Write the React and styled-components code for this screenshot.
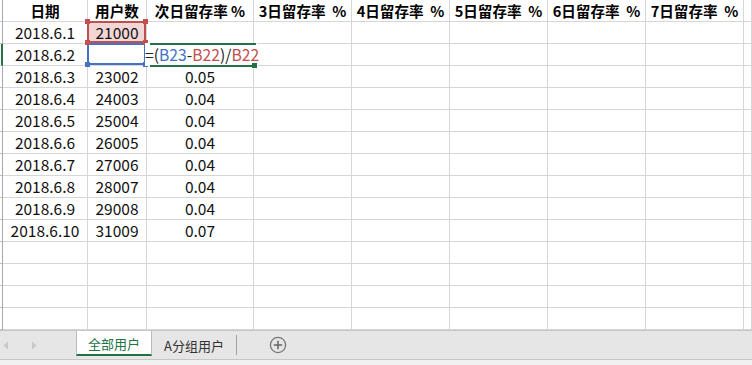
import React from 'react';
import styled, { createGlobalStyle, css } from 'styled-components';

const GlobalStyle = createGlobalStyle`
    html, body {
        margin: 0;
        padding: 0;
        background: #fff;
    }
    body {
        font-family: "Noto Sans CJK SC", "Noto Sans", sans-serif;
        color: #111;
    }
`;

const GRID_LINE = '#d6d6d6';
const GREEN = '#217346';
const RED = '#c0504d';
const BLUE = '#4472c4';

const Sheet = styled.div`
    width: 752px;
    height: 365px;
    overflow: hidden;
    display: flex;
    flex-direction: column;
`;

const Grid = styled.div`
    display: grid;
    grid-template-columns: 3px 85px 59px 107px repeat(5, 98px) 1fr;
    grid-auto-rows: 22px;
    height: 330px;
`;

const RowStub = styled.div`
    box-sizing: border-box;
    border-right: ${ ({ active }) => active ? `2px solid ${ GREEN }` : '1px solid #a8a8a8' };
    border-bottom: 1px solid #bdbdbd;
`;

const Cell = styled.div`
    position: relative;
    box-sizing: border-box;
    border-right: 1px solid ${ GRID_LINE };
    border-bottom: 1px solid ${ GRID_LINE };
    display: flex;
    align-items: center;
    justify-content: center;
    padding-top: 1px;
    font-size: 15.5px;
    line-height: 1;
    white-space: pre;
    background: ${ ({ fill }) => fill || 'transparent' };
`;

const HeaderCell = styled(Cell)`
    font-size: 14.6px;
    font-weight: 700;
    color: #000;
`;

const SelectBox = styled.div`
    position: absolute;
    top: -1px;
    left: -1px;
    right: 0;
    bottom: 0;
    border: 2px solid ${ ({ color }) => color };
    z-index: ${ ({ layer }) => layer };
    pointer-events: none;
`;

const Handle = styled.span`
    position: absolute;
    width: 5px;
    height: 5px;
    background: ${ ({ color }) => color };
    ${ ({ corner }) => corner.includes('t') ? css`top: -4px;` : css`bottom: -4px;` }
    ${ ({ corner }) => corner.includes('l') ? css`left: -4px;` : css`right: -4px;` }
`;

const Editor = styled.div`
    position: absolute;
    top: -1px;
    left: -2px;
    width: 112px;
    height: 23px;
    background: #fff;
    z-index: 3;
    display: flex;
    align-items: center;
    justify-content: flex-start;
    padding-top: 1px;
    box-sizing: border-box;
    font-size: 15.7px;
    &::before, &::after {
        content: '';
        position: absolute;
        left: 5px;
        right: 1px;
        height: 2px;
        background: ${ GREEN };
    }
    &::before { top: 0; }
    &::after { bottom: -1px; }
`;

const EditorHandle = styled.span`
    position: absolute;
    right: -1px;
    bottom: -3px;
    width: 5px;
    height: 5px;
    background: ${ GREEN };
    border: 1px solid #fff;
`;

const Ref = styled.span`
    color: ${ ({ color }) => color || '#222' };
`;

const TabBar = styled.div`
    box-sizing: border-box;
    height: 30px;
    background: #e6e6e6;
    border-top: 1px solid #c6c6c6;
    border-bottom: 1px solid #c6c6c6;
    display: flex;
    align-items: flex-start;
`;

const Nav = styled.div`
    width: 76px;
    height: 28px;
    display: flex;
    align-items: center;
    gap: 22px;
    padding-left: 3px;
    box-sizing: border-box;
`;

const Tab = styled.div`
    box-sizing: border-box;
    height: 25px;
    padding: 0 11px;
    display: flex;
    align-items: center;
    font-size: 13px;
    color: ${ ({ active }) => active ? GREEN : '#333' };
    ${ ({ active }) => active && css`
        background: #fff;
        border-left: 1px solid #bcbcbc;
        border-right: 1px solid #bcbcbc;
        border-bottom: 2px solid ${ GREEN };
        padding-top: 2px;
    ` }
    ${ ({ active }) => !active && css`
        height: 28px;
        padding: 0 12px;
    ` }
`;

const Divider = styled.div`
    width: 1px;
    height: 20px;
    margin-top: 4px;
    background: #a0a0a0;
`;

const AddButton = styled.div`
    margin-left: 32px;
    height: 28px;
    display: flex;
    align-items: center;
`;

const BottomStrip = styled.div`
    flex: 1;
    background: #f1f1f1;
`;

const headers = ['日期', '用户数', '次日留存率 %', '3日留存率  %', '4日留存率  %', '5日留存率  %', '6日留存率  %', '7日留存率  %', ''];

const rows = [
    ['2018.6.1', '21000', ''],
    ['2018.6.2', '', ''],
    ['2018.6.3', '23002', '0.05'],
    ['2018.6.4', '24003', '0.04'],
    ['2018.6.5', '25004', '0.04'],
    ['2018.6.6', '26005', '0.04'],
    ['2018.6.7', '27006', '0.04'],
    ['2018.6.8', '28007', '0.04'],
    ['2018.6.9', '29008', '0.04'],
    ['2018.6.10', '31009', '0.07'],
    ['', '', ''],
    ['', '', ''],
    ['', '', ''],
    ['', '', ''],
];

const Arrow = ({ dir }) => (
    <svg width="6" height="9" viewBox="0 0 6 9">
        { dir === 'left'
            ? <path d="M5 0.5 L0.5 4.5 L5 8.5 Z" fill="#c9c9c9"/>
            : <path d="M1 0.5 L5.5 4.5 L1 8.5 Z" fill="#c9c9c9"/> }
    </svg>
);

const PlusCircle = () => (
    <svg width="18" height="18" viewBox="0 0 18 18">
        <circle cx="9" cy="9" r="7.6" fill="none" stroke="#777" strokeWidth="1.3"/>
        <path d="M9 4.8 V13.2 M4.8 9 H13.2" stroke="#666" strokeWidth="1.5"/>
    </svg>
);

const emptyCells = (prefix) => Array.from({ length: 6 }).map((_, i) => <Cell key={ `${ prefix }${ i }` }/>);

const App = () => {
    return (
        <Sheet>
            <GlobalStyle/>
            <Grid>
                <RowStub/>
                { headers.map((h, i) => <HeaderCell key={ i }>{ h }</HeaderCell>) }

                { rows.map((row, r) => (
                    <React.Fragment key={ r }>
                        <RowStub active={ r === 1 }/>
                        <Cell>{ row[0] }</Cell>
                        { r === 0 && (
                            <Cell fill="#f2d6d6">
                                { row[1] }
                                <SelectBox color={ RED } layer={ 2 }>
                                    <Handle color={ RED } corner="tl"/>
                                    <Handle color={ RED } corner="tr"/>
                                    <Handle color={ RED } corner="bl"/>
                                    <Handle color={ RED } corner="br"/>
                                </SelectBox>
                            </Cell>
                        ) }
                        { r === 1 && (
                            <Cell>
                                <SelectBox color={ BLUE } layer={ 1 }>
                                    <Handle color={ BLUE } corner="bl"/>
                                    <Handle color={ BLUE } corner="br"/>
                                </SelectBox>
                            </Cell>
                        ) }
                        { r > 1 && <Cell>{ row[1] }</Cell> }
                        { r === 1 ? (
                            <Cell>
                                <Editor>
                                    <Ref>=(</Ref>
                                    <Ref color={ BLUE }>B23</Ref>
                                    <Ref>-</Ref>
                                    <Ref color={ RED }>B22</Ref>
                                    <Ref>)/</Ref>
                                    <Ref color={ RED }>B22</Ref>
                                    <EditorHandle/>
                                </Editor>
                            </Cell>
                        ) : <Cell>{ row[2] }</Cell> }
                        { emptyCells('e') }
                    </React.Fragment>
                )) }
            </Grid>
            <TabBar>
                <Nav>
                    <Arrow dir="left"/>
                    <Arrow dir="right"/>
                </Nav>
                <Tab active>全部用户</Tab>
                <Tab>A分组用户</Tab>
                <Divider/>
                <AddButton>
                    <PlusCircle/>
                </AddButton>
            </TabBar>
            <BottomStrip/>
        </Sheet>
    );
};

export default App;
